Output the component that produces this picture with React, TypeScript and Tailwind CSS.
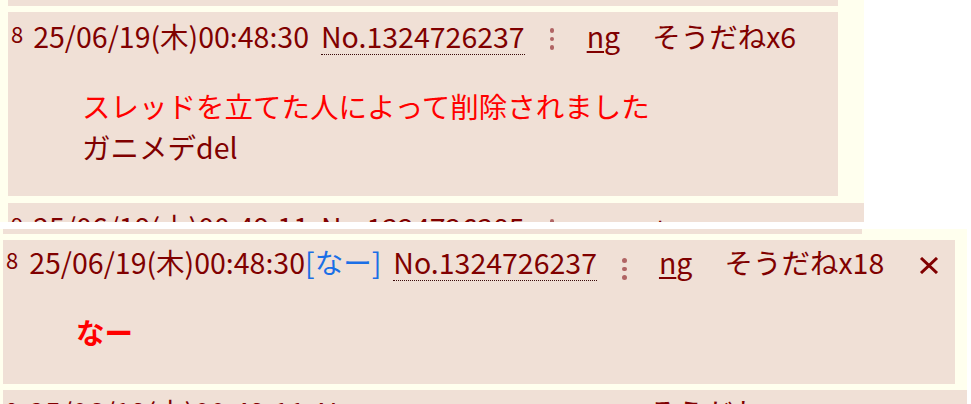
import React from "react";

const MAROON = "text-[#800000]";

function Dots({ top }: { top: string }) {
  return (
    <span className={`ml-[25px] flex w-[5px] flex-col items-center gap-[4px] self-start ${top}`}>
      <span className="h-[4.5px] w-[4.5px] rounded-full bg-[#b06464]" />
      <span className="h-[4.5px] w-[4.5px] rounded-full bg-[#b06464]" />
      <span className="h-[4.5px] w-[4.5px] rounded-full bg-[#b06464]" />
    </span>
  );
}

function Header({
  num,
  date,
  no,
  sodane,
  tag,
  close,
  dotsTop,
  dateGap,
}: {
  num: string;
  date: string;
  no: string;
  sodane: string;
  tag?: string;
  close?: boolean;
  dotsTop: string;
  dateGap: string;
}) {
  return (
    <div className={`flex h-[41px] items-start whitespace-nowrap text-[28.5px] leading-[41px] ${MAROON}`}>
      <span className="text-[22px] leading-[37px]">{num}</span>
      <span className={dateGap}>{date}</span>
      {tag ? <span className="text-[#1b6fe6]">{tag}</span> : null}
      <span className="ml-[12px] h-[40px] border-b border-dotted border-[#3a0a0a]">{no}</span>
      <Dots top={dotsTop} />
      <span className="ml-[32px]">
        <span className="underline decoration-2 underline-offset-[3px]">n</span>g
      </span>
      <span className="ml-[32px]">{sodane}</span>
      {close ? (
        <svg
          className="ml-[35px] mt-[16px] shrink-0"
          width="20"
          height="17"
          viewBox="0 0 20 17"
        >
          <path d="M2 1 L18 16 M18 1 L2 16" stroke="#800000" strokeWidth="3" fill="none" />
        </svg>
      ) : null}
    </div>
  );
}

export default function App() {
  return (
    <div className="flex h-[404px] w-[971px] flex-col overflow-hidden bg-white font-['Noto_Sans_CJK_JP','Noto_Sans',sans-serif]">
      {/* upper panel */}
      <section className="flex h-[222px] w-[864px] shrink-0 flex-col overflow-hidden bg-[#ffffee] pl-[8px]">
        <div className="h-[6px] w-[830px] shrink-0 bg-[#f0e0d6]" />
        <div className="mt-[6px] h-[184px] w-[830px] shrink-0 bg-[#f0e0d6] pl-[3px] pt-[3px]">
          <Header
            num="8"
            date="25/06/19(木)00:48:30"
            no="No.1324726237"
            sodane="そうだねx6"
            dotsTop="mt-[13px]"
            dateGap="ml-[10px]"
          />
          <div className="ml-[71px] mt-[29px] text-[28.5px] leading-[41px]">
            <div className="text-[#ff0000]">スレッドを立てた人によって削除されました</div>
            <div className={MAROON}>ガニメデdel</div>
          </div>
        </div>
        <div className="mt-[7px] h-[60px] w-[856px] shrink-0 bg-[#f0e0d6] pl-[3px] pt-[3px]">
          <Header
            num="9"
            date="25/06/19(木)00:49:11"
            no="No.1324726385"
            sodane="+"
            dotsTop="mt-[13px]"
            dateGap="ml-[10px]"
          />
        </div>
      </section>

      {/* lower panel */}
      <section className="mt-[7px] flex w-[967px] flex-1 flex-col overflow-hidden bg-[#ffffee] pl-[3px]">
        <div className="h-[5px] w-[859px] shrink-0 bg-[#f0e0d6]" />
        <div className="mt-[6px] h-[144px] w-[952px] shrink-0 bg-[#f0e0d6] pl-[3px] pt-[1px]">
          <Header
            num="8"
            date="25/06/19(木)00:48:30"
            tag="[なー]"
            no="No.1324726237"
            sodane="そうだねx18"
            close
            dotsTop="mt-[17px]"
            dateGap="ml-[11px]"
          />
          <div className="ml-[70px] mt-[29px] text-[28.5px] font-bold leading-[41px] text-[#ff0000]">
            なー
          </div>
        </div>
        <div className="mt-[6px] h-[60px] w-[964px] shrink-0 bg-[#f0e0d6] pl-[3px] pt-[1px]">
          <Header
            num="9"
            date="25/06/19(木)00:49:11"
            no="No.1324726385"
            sodane="そうだねx1"
            dotsTop="mt-[17px]"
            dateGap="ml-[11px]"
          />
        </div>
      </section>
    </div>
  );
}
